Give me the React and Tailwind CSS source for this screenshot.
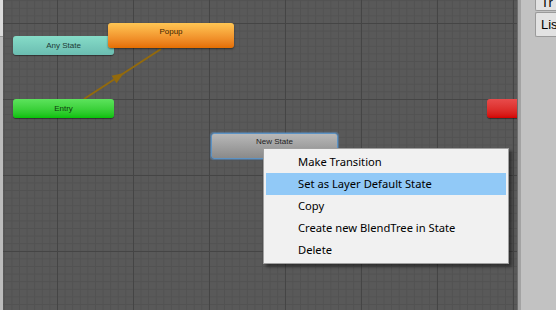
export default function App() {
  const font = { fontFamily: '"Liberation Sans", Arial, sans-serif' };
  const menuFont = { fontFamily: '"Noto Sans", "Open Sans", sans-serif' };
  return (
    <div className="flex h-[310px] w-[556px] overflow-hidden bg-[#c2c2c2]" style={font}>
      {/* left strip */}
      <div className="flex w-[3px] shrink-0 flex-col overflow-hidden">
        <div className="h-[37px] bg-[#dcdcdc] border-b border-[#9a9a9a]" />
        <div className="flex-1 bg-[#bcbcbc]" />
      </div>
      {/* canvas */}
      <div
        className="relative w-[514px] shrink-0 overflow-hidden bg-[#595959] [background-image:linear-gradient(to_right,#454545_1px,transparent_1px),linear-gradient(to_bottom,#454545_1px,transparent_1px),linear-gradient(to_right,#525252_1px,transparent_1px),linear-gradient(to_bottom,#525252_1px,transparent_1px)] [background-size:76px_76px,76px_76px,7.6px_7.6px,7.6px_7.6px] [background-position:54px_23px,54px_23px,54px_23px,54px_23px]"
      >
        {/* transition arrow */}
        <svg className="absolute left-0 top-0" width="514" height="310">
          <line x1="81" y1="99" x2="158" y2="49" stroke="#936a0c" strokeWidth="2" />
          <polygon points="121,73 108.5,75.7 113.5,83.3" fill="#936a0c" />
        </svg>

        {/* Any State */}
        <div className="absolute left-[10px] top-[36px] flex h-[19px] w-[101px] items-center justify-center rounded-[3px] bg-gradient-to-b from-[#86dcc8] to-[#6bbdb1] text-[8px] text-[#1d3a34] shadow-[0_1px_1px_rgba(0,0,0,0.45)]">
          Any State
        </div>
        {/* Popup */}
        <div className="absolute left-[105px] top-[23px] flex h-[25px] w-[126px] items-start justify-center rounded-[3px] bg-gradient-to-b from-[#ffc653] to-[#e56e00] pt-[3px] text-[8px] text-[#3a2200] shadow-[0_1px_2px_rgba(0,0,0,0.5)]">
          Popup
        </div>
        {/* Entry */}
        <div className="absolute left-[10px] top-[99px] flex h-[19px] w-[101px] items-center justify-center rounded-[3px] bg-gradient-to-b from-[#5ce35c] to-[#05c205] text-[8px] text-[#0f3a0f] shadow-[0_1px_1px_rgba(0,0,0,0.45)]">
          Entry
        </div>
        {/* Exit (clipped) */}
        <div className="absolute left-[484px] top-[99px] h-[19px] w-[60px] rounded-[3px] bg-gradient-to-b from-[#e84b4b] to-[#d40000] shadow-[0_1px_1px_rgba(0,0,0,0.45)]" />
        {/* New State */}
        <div className="absolute left-[208px] top-[133px] flex h-[26px] w-[127px] items-start justify-center rounded-[3px] border border-[#5d93c4] bg-gradient-to-b from-[#b8b8b8] to-[#8a8a8a] pt-[2px] text-[8px] text-[#222] shadow-[0_0_1px_1px_rgba(90,150,210,0.5)]">
          New State
        </div>

        {/* context menu */}
        <div
          className="absolute left-[260px] top-[148px] w-[246px] border border-[#a0a0a0] bg-[#f1f1f1] px-[2px] py-[2px] text-[11.2px] text-black shadow-[3px_3px_3px_rgba(0,0,0,0.45)]"
          style={menuFont}
        >
          {["Make Transition", "Set as Layer Default State", "Copy", "Create new BlendTree in State", "Delete"].map(
            (t, i) => (
              <div
                key={t}
                className={
                  "flex h-[22px] items-center pl-[32px] " + (i === 1 ? "bg-[#91c9f7]" : "")
                }
              >
                {t}
              </div>
            )
          )}
        </div>
      </div>
      {/* right divider + panel */}
      <div className="w-[1px] shrink-0 bg-[#6e6e6e]" />
      <div className="w-[3px] shrink-0 bg-[#a3a3a3]" />
      <div className="flex flex-1 flex-col overflow-hidden pl-[14px]">
        <div className="-mt-[4px] flex h-[15px] items-center overflow-hidden rounded-bl-[2px] border border-t-0 border-r-0 border-[#9a9a9a] bg-[#e2e2e2] pl-[5px] text-[13px] text-black">
          Tr
        </div>
        <div className="mt-[1px] flex h-[25px] items-center overflow-hidden rounded-l-[2px] border border-r-0 border-[#9a9a9a] bg-[#e2e2e2] pl-[5px] text-[13px] text-black">
          Lis
        </div>
      </div>
    </div>
  );
}
